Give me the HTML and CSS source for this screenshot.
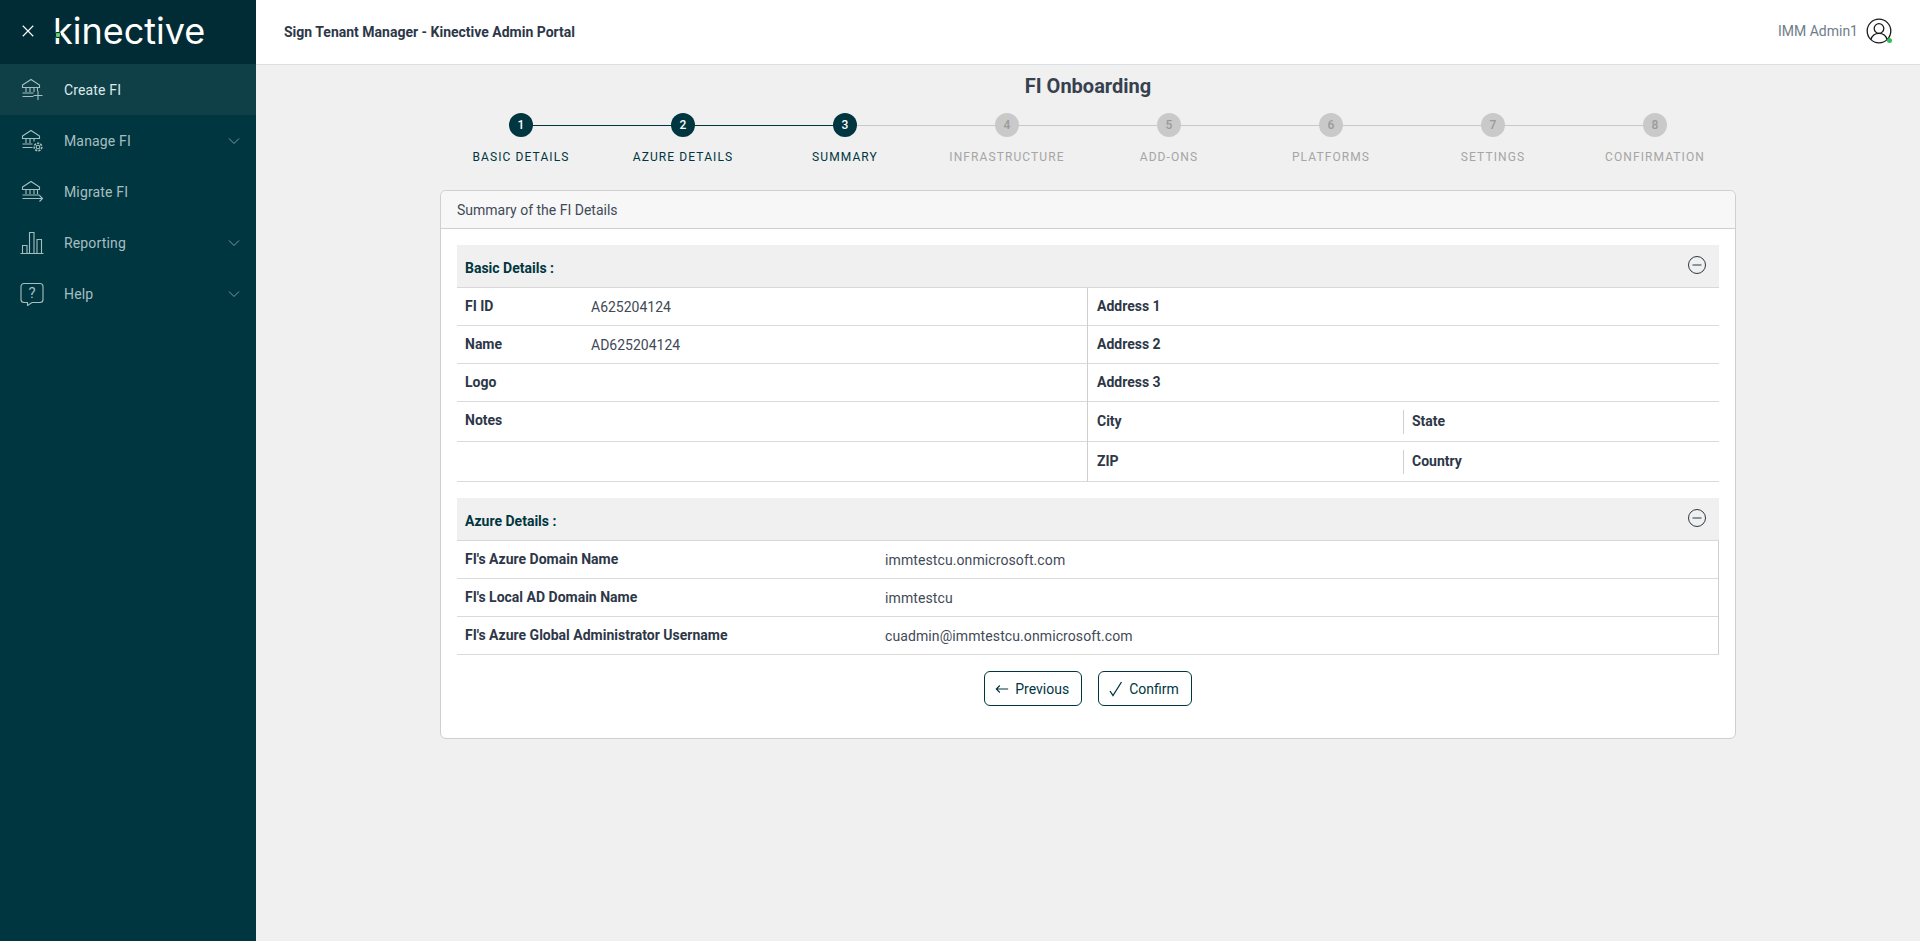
FILE: index.html
```html
<!DOCTYPE html>
<html>
<head>
<meta charset="utf-8">
<title>Sign Tenant Manager - Kinective Admin Portal</title>
<link rel="stylesheet" href="styles.css">
</head>
<body>
<aside class="sidebar">
  <div class="brand">
    <svg class="brand-close" viewBox="0 0 16 16"><path d="M2 2l12 12M14 2L2 14"/></svg>
    <span class="brand-logo">kinective<i class="brand-dot"></i></span>
  </div>
  <nav class="menu">
    <a class="menu-item active">
      <svg class="menu-icon" viewBox="0 0 24 24"><path d="M2.500 7L11 1.500 19.500 7v2.500h-17zM6 9.500v4.500M10 9.500v4.500M14 9.500v4.500M17.500 9.500v3.500M2.500 15h11M2.500 18.500h11M18 13v9M13.500 17.500h9"/></svg>
      <span class="menu-text">Create FI</span>
    </a>
    <a class="menu-item">
      <svg class="menu-icon" viewBox="0 0 24 24"><path d="M2.500 7L11 1.500 19.500 7v2.500h-17zM6 9.500v4.500M10 9.500v4.500M14 9.500v3M2.500 15h10M2.500 18.500h10"/><circle cx="18" cy="18" r="1.800"/><circle cx="18" cy="18" r="3.800" stroke-dasharray="2.200 1.100" stroke-width="1.600"/></svg>
      <span class="menu-text">Manage FI</span>
      <svg class="menu-arrow" viewBox="0 0 12 8"><path d="M1 1.500l5 5 5-5"/></svg>
    </a>
    <a class="menu-item">
      <svg class="menu-icon" viewBox="0 0 24 24"><path d="M2.500 7L11 1.500 19.500 7v2.500h-17zM6 9.500v4.500M10 9.500v4.500M14 9.500v4.500M17.500 9.500v4.500M2.500 15h17M2.500 18.500h20M19.500 15.500l3 3-3 3"/></svg>
      <span class="menu-text">Migrate FI</span>
    </a>
    <a class="menu-item">
      <svg class="menu-icon" viewBox="0 0 24 24"><path d="M0.500 22.500h23M2.500 22.500v-8h4.500v8M9.500 22.500v-21h4.500v21M17 22.500v-14h4.500v14"/></svg>
      <span class="menu-text">Reporting</span>
      <svg class="menu-arrow" viewBox="0 0 12 8"><path d="M1 1.500l5 5 5-5"/></svg>
    </a>
    <a class="menu-item">
      <svg class="menu-icon" viewBox="0 0 24 24"><path d="M4 1.500h16a3 3 0 0 1 3 3v13a3 3 0 0 1-3 3h-8l-4.500 3v-3H4a3 3 0 0 1-3-3v-13a3 3 0 0 1 3-3z"/><text class="menu-help" x="12" y="16">?</text></svg>
      <span class="menu-text">Help</span>
      <svg class="menu-arrow" viewBox="0 0 12 8"><path d="M1 1.500l5 5 5-5"/></svg>
    </a>
  </nav>
</aside>
<div class="main">
  <header class="topbar">
    <div class="topbar-title">Sign Tenant Manager - Kinective Admin Portal</div>
    <div class="user">
      <span class="user-name">IMM Admin1</span>
      <span class="user-icon">
        <svg viewBox="0 0 26 26"><circle cx="13" cy="13" r="11.800"/><circle cx="13" cy="10.500" r="4.800"/><path d="M5 21.500c1-4 4-6.200 8-6.200s7 2.200 8 6.200"/></svg>
        <i class="user-dot"></i>
      </span>
    </div>
  </header>
  <div class="content">
    <h1 class="title">FI Onboarding</h1>
    <ol class="stepper">
      <li class="step done"><span class="step-num">1</span><span class="step-label">Basic Details</span></li>
      <li class="step done"><span class="step-num">2</span><span class="step-label">Azure Details</span></li>
      <li class="step current"><span class="step-num">3</span><span class="step-label">Summary</span></li>
      <li class="step"><span class="step-num">4</span><span class="step-label">Infrastructure</span></li>
      <li class="step"><span class="step-num">5</span><span class="step-label">Add-ons</span></li>
      <li class="step"><span class="step-num">6</span><span class="step-label">Platforms</span></li>
      <li class="step"><span class="step-num">7</span><span class="step-label">Settings</span></li>
      <li class="step"><span class="step-num">8</span><span class="step-label">Confirmation</span></li>
    </ol>
    <section class="card">
      <div class="card-header">Summary of the FI Details</div>
      <div class="card-body">
        <div class="section-head">
          <span>Basic Details :</span>
          <svg class="collapse" viewBox="0 0 20 20"><circle cx="10" cy="10" r="8.500"/><path d="M5.500 10h9"/></svg>
        </div>
        <div class="basic">
          <div class="basic-col left">
            <div class="row"><span class="label">FI ID</span><span class="value">A625204124</span></div>
            <div class="row"><span class="label">Name</span><span class="value">AD625204124</span></div>
            <div class="row"><span class="label">Logo</span></div>
            <div class="row tall top"><span class="label">Notes</span></div>
            <div class="row tall"></div>
          </div>
          <div class="basic-col right">
            <div class="row"><span class="label">Address 1</span></div>
            <div class="row"><span class="label">Address 2</span></div>
            <div class="row"><span class="label">Address 3</span></div>
            <div class="row tall split"><span class="label half">City</span><span class="label half sep">State</span></div>
            <div class="row tall split"><span class="label half">ZIP</span><span class="label half sep">Country</span></div>
          </div>
        </div>
        <div class="section-head second">
          <span>Azure Details :</span>
          <svg class="collapse" viewBox="0 0 20 20"><circle cx="10" cy="10" r="8.500"/><path d="M5.500 10h9"/></svg>
        </div>
        <div class="azure">
          <div class="row"><span class="label wide">FI's Azure Domain Name</span><span class="value">immtestcu.onmicrosoft.com</span></div>
          <div class="row"><span class="label wide">FI's Local AD Domain Name</span><span class="value">immtestcu</span></div>
          <div class="row"><span class="label wide">FI's Azure Global Administrator Username</span><span class="value">cuadmin@immtestcu.onmicrosoft.com</span></div>
        </div>
        <div class="actions">
          <button class="btn" type="button"><svg class="btn-icon" viewBox="0 0 16 12"><path d="M15 6H1.500M5.500 2L1.500 6l4 4"/></svg>Previous</button>
          <button class="btn" type="button"><svg class="btn-icon check" viewBox="0 0 14 16"><path d="M1 10l3 4.500L12.500 1"/></svg>Confirm</button>
        </div>
      </div>
    </section>
  </div>
</div>
</body>
</html>
```
FILE: styles.css
```css
* {
  box-sizing: border-box;
}

html,
body {
  height: 100%;
}

body {
  display: flex;
  margin: 0;
  overflow: hidden;
  background-color: #f0f0f0;
  color: #2d3748;
  font-family: Roboto, "Liberation Sans", sans-serif;
  font-size: 14px;
}

/* sidebar */
.sidebar {
  flex: 0 0 256px;
  background-color: #00363f;
}

.brand {
  display: flex;
  align-items: center;
  height: 64px;
  padding-left: 21px;
  background-color: #012b35;
}

.brand-close {
  width: 14px;
  height: 14px;
  margin-top: -2px;
  fill: none;
  stroke: #fff;
  stroke-width: 1.300;
}

.brand-logo {
  position: relative;
  margin-left: 18px;
  margin-top: -3px;
  color: #fff;
  font-family: Inter, "Noto Sans", sans-serif;
  font-size: 36px;
  font-weight: 400;
  letter-spacing: 0;
  line-height: 40px;
}

.brand-dot {
  position: absolute;
  left: 3px;
  top: 22px;
  width: 4px;
  height: 4px;
  border-radius: 1px;
  background-color: #5fd35a;
  box-shadow: 0 0 0 1px #012b35;
}

.menu-item {
  display: flex;
  align-items: center;
  height: 51px;
  padding: 0 16px 0 20px;
  color: #a7bec1;
}

.menu-item.active {
  background-color: #0f4047;
  color: #dce8ea;
}

.menu-icon {
  flex: none;
  width: 24px;
  height: 24px;
  fill: none;
  stroke: #a7bec1;
  stroke-width: 1.100;
}

.menu-help {
  fill: #a7bec1;
  stroke: none;
  font-size: 15px;
  text-anchor: middle;
}

.menu-text {
  flex: 1;
  margin-left: 20px;
  letter-spacing: 0.15px;
}

.menu-arrow {
  width: 12px;
  height: 8px;
  fill: none;
  stroke: #8aa5a9;
  stroke-width: 0.900;
}

/* top bar */
.main {
  flex: 1;
  min-width: 0;
}

.topbar {
  display: flex;
  align-items: center;
  justify-content: space-between;
  height: 65px;
  padding: 0 28px;
  border-bottom: 1px solid #dcdfe3;
  background-color: #fff;
}

.topbar-title {
  font-weight: 700;
  font-size: 14px;
}

.user {
  display: flex;
  align-items: center;
  margin-top: -3px;
}

.user-name {
  color: #6f7d8a;
}

.user-icon {
  position: relative;
  width: 26px;
  height: 26px;
  margin-left: 8px;
}

.user-icon svg {
  display: block;
  fill: none;
  stroke: #1a1a1a;
  stroke-width: 1.300;
}

.user-dot {
  position: absolute;
  right: 0;
  bottom: 1px;
  width: 5px;
  height: 5px;
  border-radius: 50%;
  background-color: #2fbf5b;
}

/* page content */
.content {
  width: 1296px;
  margin: 0 auto;
}

.title {
  margin: 9px 0 0;
  color: #36404f;
  font-size: 20px;
  font-weight: 700;
  line-height: 24px;
  text-align: center;
}

.stepper {
  display: grid;
  grid-template-columns: repeat(8, 1fr);
  margin: 15px 0 0;
  padding: 0;
  list-style: none;
}

.step {
  position: relative;
  display: flex;
  flex-direction: column;
  align-items: center;
}

.step::after {
  content: "";
  position: absolute;
  left: 50%;
  top: 12px;
  width: 100%;
  height: 1px;
  background-color: #c8c8c8;
}

.step:last-child::after {
  display: none;
}

.step.done::after {
  background-color: #00363f;
}

.step-num {
  position: relative;
  z-index: 1;
  width: 24px;
  height: 24px;
  border-radius: 50%;
  background-color: #c9c9c9;
  color: #9a9a9a;
  font-size: 12px;
  font-weight: 500;
  line-height: 24px;
  text-align: center;
}

.step.done .step-num,
.step.current .step-num {
  background-color: #00363f;
  color: #fff;
}

.step-label {
  margin-top: 11px;
  color: #a5a5a5;
  font-size: 12px;
  letter-spacing: 1.1px;
  line-height: 18px;
  text-transform: uppercase;
}

.step.done .step-label,
.step.current .step-label {
  color: #00363f;
}

/* card */
.card {
  height: 549px;
  margin-top: 24px;
  border: 1px solid #cfcfcf;
  border-radius: 6px;
  background-color: #fff;
}

.card-header {
  height: 38px;
  padding: 0 16px;
  border-bottom: 1px solid #cfcfcf;
  border-radius: 6px 6px 0 0;
  background-color: #f7f7f7;
  color: #3f4a57;
  line-height: 39px;
}

.card-body {
  padding: 16px 16px 0;
}

.section-head {
  display: flex;
  align-items: center;
  justify-content: space-between;
  height: 43px;
  padding: 3px 12px 0 8px;
  border-bottom: 1px solid #d8d8d8;
  background-color: #f0f0f0;
  color: #00363f;
  font-weight: 700;
}

.section-head.second {
  margin-top: 16px;
}

.collapse {
  width: 20px;
  height: 20px;
  margin-top: -6px;
  fill: none;
  stroke: #2b3a42;
  stroke-width: 1;
}

.basic {
  display: flex;
}

.basic-col {
  flex: 1;
}

.basic-col.left {
  flex: 0 0 631px;
  border-right: 1px solid #cfcfcf;
}

.row {
  display: flex;
  align-items: center;
  height: 38px;
  padding: 0 0 2px 8px;
  border-bottom: 1px solid #dadada;
}

.row.tall {
  height: 40px;
}

.row.top {
  align-items: flex-start;
  padding-top: 10px;
}

.row.split {
  padding: 0;
}

.basic-col.right .row:not(.split) {
  padding-left: 9px;
}

.label {
  flex: 0 0 126px;
  font-weight: 700;
}

.label.wide {
  flex-basis: 420px;
}

.label.half {
  flex: 0 0 315px;
  padding: 0 0 2px 9px;
  line-height: 22px;
}

.label.half.sep {
  flex: 1;
  border-left: 1px solid #cfcfcf;
  padding-left: 8px;
}

.value {
  margin-top: 2px;
  color: #3f4a57;
}

.azure {
  border-right: 1px solid #cfcfcf;
}

.azure .value {
  letter-spacing: 0.1px;
}

.actions {
  display: flex;
  justify-content: center;
  gap: 16px;
  margin-top: 16px;
}

.btn {
  display: flex;
  align-items: center;
  height: 35px;
  padding: 0 12px 0 10px;
  border: 1px solid #00363f;
  border-radius: 6px;
  background-color: #fff;
  color: #00363f;
  font-family: Roboto, sans-serif;
  font-size: 14px;
}

.btn-icon {
  width: 14px;
  height: 12px;
  margin-right: 6px;
  fill: none;
  stroke: #00363f;
  stroke-width: 1.300;
}

.btn-icon.check {
  height: 16px;
}
```
